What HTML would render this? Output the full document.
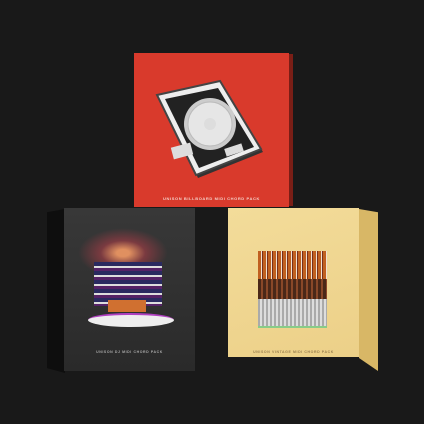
<!DOCTYPE html><html><head><style>
body{margin:0;width:424px;height:424px;background:#191919;position:relative;overflow:hidden;font-family:"Liberation Sans",sans-serif}
div,svg{position:absolute}
.t{font-size:4px;letter-spacing:.6px;font-weight:bold;text-align:center;white-space:nowrap}
</style></head><body>
<!-- red box -->
<div style="left:289px;top:54px;width:4px;height:152px;background:#7a1e16"></div>
<div style="left:134px;top:53px;width:155px;height:154px;background:#d93a2c"></div>
<svg style="left:0;top:0" width="424" height="424">
<polygon points="161,98 222,84 263,152 198,178" fill="#333"/>
<polygon points="157,95 220,81 261,149 196,175" fill="#eee" stroke="#444" stroke-width="2"/>
<polygon points="165,99 218,88 254,147 199,168" fill="#222"/>
<circle cx="210" cy="124" r="26" fill="#ccc"/>
<circle cx="210" cy="124" r="22" fill="#e6e6e6" stroke="#bbb" stroke-width="1"/>
<circle cx="210" cy="124" r="6" fill="#ddd"/>
<rect x="225" y="146" width="18" height="8" fill="#ddd" transform="rotate(-18 234 150)"/>
<rect x="172" y="145" width="20" height="12" fill="#ddd" transform="rotate(-15 182 151)"/>
</svg>
<div class="t" style="left:134px;top:196px;width:155px;color:#f3d0c8">UNISON BILLBOARD MIDI CHORD PACK</div>
<!-- black box -->
<div style="left:47px;top:209px;width:18px;height:164px;background:#0e0e0e;clip-path:polygon(0 2%,100% 0,100% 100%,0 97%)"></div>
<div style="left:64px;top:208px;width:131px;height:163px;background:linear-gradient(#383838,#2a2a2a)"></div>
<div style="left:78px;top:228px;width:90px;height:50px;border-radius:50%;background:radial-gradient(#e09060 10%,#7a3a40 35%,transparent 70%)"></div>
<div style="left:94px;top:262px;width:68px;height:44px;background:repeating-linear-gradient(#2a2a60 0 4px,#ddd 4px 6px,#552266 6px 9px)"></div>
<div style="left:108px;top:300px;width:38px;height:12px;background:#d07030"></div>
<div style="left:88px;top:313px;width:86px;height:12px;border-radius:50%;background:#eee;border-top:2px solid #b040c0"></div>
<div class="t" style="left:64px;top:350px;width:131px;color:#aaa;font-size:3.5px">UNISON DJ MIDI CHORD PACK</div>
<!-- yellow box -->
<div style="left:359px;top:209px;width:19px;height:162px;background:#d8b766;clip-path:polygon(0 0,100% 2%,100% 100%,0 92%)"></div>
<div style="left:228px;top:208px;width:131px;height:149px;background:linear-gradient(160deg,#f3dc9a,#ecd088)"></div>
<div style="left:258px;top:251px;width:69px;height:28px;background:repeating-linear-gradient(90deg,#c06020 0 3px,#f0e0d0 3px 4px,#7a3018 4px 5px)"></div>
<div style="left:258px;top:279px;width:69px;height:20px;background:repeating-linear-gradient(90deg,#4a2818 0 3px,#8a4828 3px 5px)"></div>
<div style="left:258px;top:299px;width:69px;height:27px;background:repeating-linear-gradient(90deg,#aaa 0 2px,#ddd 2px 4px);border-bottom:2px solid #8c8"></div>
<div class="t" style="left:228px;top:350px;width:131px;color:#9a8050;font-size:3.5px">UNISON VINTAGE MIDI CHORD PACK</div>
</body></html>
